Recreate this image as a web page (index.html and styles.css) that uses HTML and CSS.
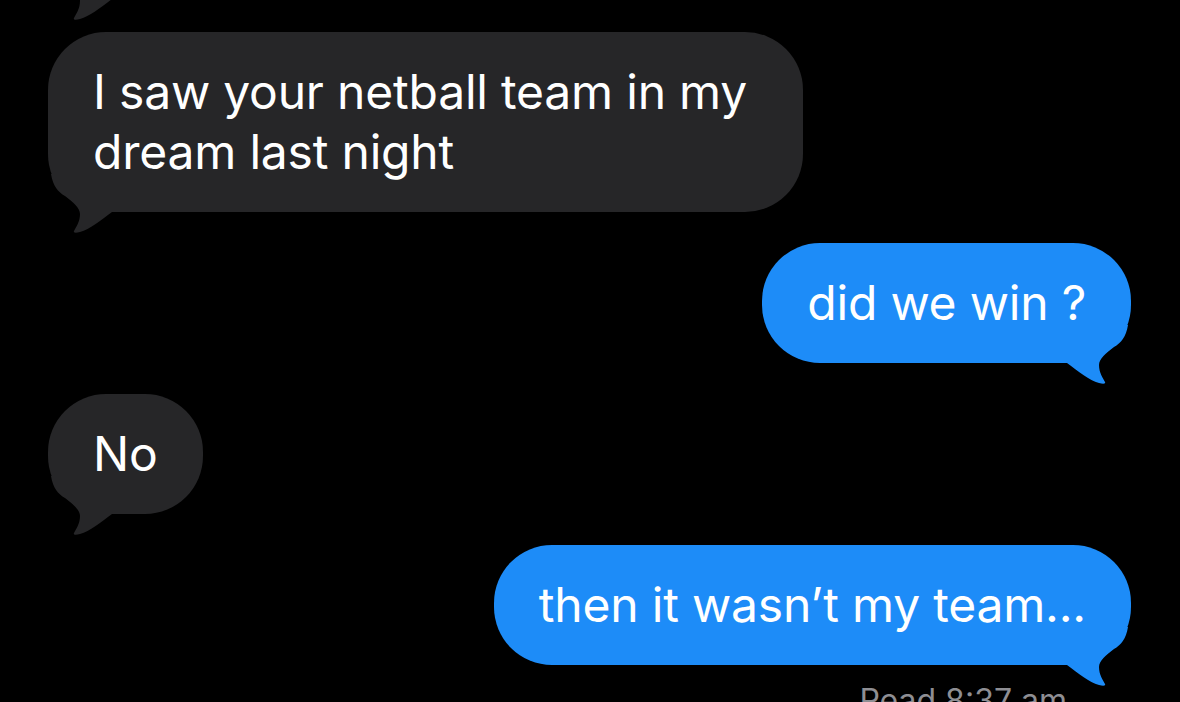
FILE: index.html
```html
<!DOCTYPE html>
<html lang="en">
<head>
<meta charset="utf-8">
<title>Messages</title>
<link rel="stylesheet" href="styles.css">
</head>
<body>
<main class="thread">
  <div class="bubble in prev">
    <svg class="tail" viewBox="0 0 70 60" aria-hidden="true"><path d="M3 0 C5 12 10 18 17 22 C25 28 32 34 32 40 C32 48 28 53 26 57 C25 59 28 59 32 58 C42 55 52 47 64 38 L64 0 Z"/></svg>
  </div>
  <div class="bubble in first">I saw your netball team in my dream last night
    <svg class="tail" viewBox="0 0 70 60" aria-hidden="true"><path d="M3 0 C5 12 10 18 17 22 C25 28 32 34 32 40 C32 48 28 53 26 57 C25 59 28 59 32 58 C42 55 52 47 64 38 L64 0 Z"/></svg>
  </div>
  <div class="bubble out">did we win ?
    <svg class="tail" viewBox="0 0 70 60" aria-hidden="true"><path d="M3 0 C5 12 10 18 17 22 C25 28 32 34 32 40 C32 48 28 53 26 57 C25 59 28 59 32 58 C42 55 52 47 64 38 L64 0 Z"/></svg>
  </div>
  <div class="bubble in">No
    <svg class="tail" viewBox="0 0 70 60" aria-hidden="true"><path d="M3 0 C5 12 10 18 17 22 C25 28 32 34 32 40 C32 48 28 53 26 57 C25 59 28 59 32 58 C42 55 52 47 64 38 L64 0 Z"/></svg>
  </div>
  <div class="bubble out">then it wasn’t my team...
    <svg class="tail" viewBox="0 0 70 60" aria-hidden="true"><path d="M3 0 C5 12 10 18 17 22 C25 28 32 34 32 40 C32 48 28 53 26 57 C25 59 28 59 32 58 C42 55 52 47 64 38 L64 0 Z"/></svg>
  </div>
  <div class="read">Read 8:37 am</div>
</main>
</body>
</html>
```

FILE: styles.css
```css
html, body {
  margin: 0;
  background: #000;
  height: 100%;
  overflow: hidden;
}

.thread {
  display: flex;
  flex-direction: column;
  gap: 31px;
  padding: 0 49px 0 48px;
  font-family: Inter, "Noto Sans", sans-serif;
}

.bubble {
  position: relative;
  box-sizing: border-box;
  max-width: 755px;
  padding: 30px 45px;
  border-radius: 58px;
  font-size: 48px;
  line-height: 60px;
  letter-spacing: -0.2px;
  color: #fff;
}

.bubble.in {
  align-self: flex-start;
  background: #262628;
}

.bubble.out {
  align-self: flex-end;
  background: #1d8cf8;
}

.prev {
  width: 420px;
  height: 120px;
  margin-top: -121px;
}

.first {
  margin-top: 2px;
}

.tail {
  position: absolute;
  bottom: -22px;
  width: 70px;
  height: 60px;
}

.in .tail {
  left: 0;
  fill: #262628;
}

.out .tail {
  right: 0;
  fill: #1d8cf8;
  transform: scaleX(-1);
}

.read {
  align-self: flex-end;
  margin-top: -14px;
  margin-right: 64px;
  font-size: 32px;
  line-height: 38px;
  color: #8e8e93;
}
```
